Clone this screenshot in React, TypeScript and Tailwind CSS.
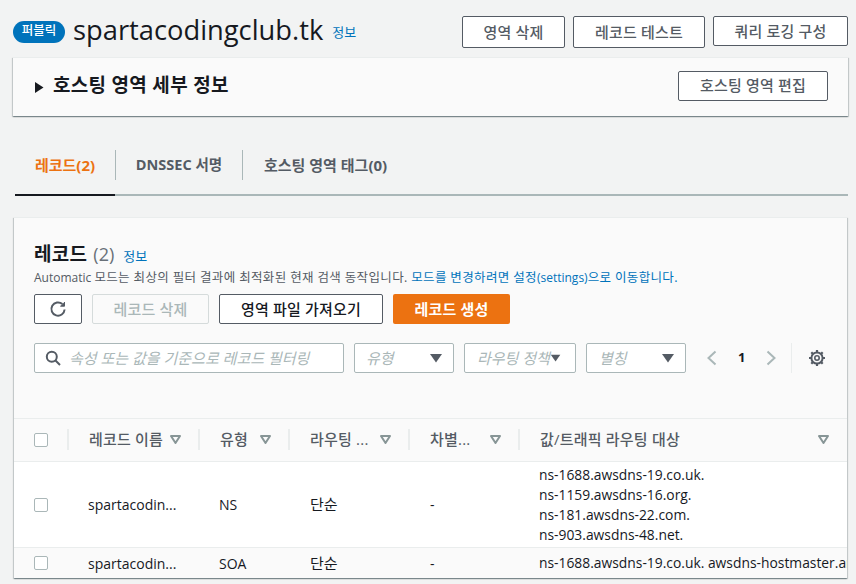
import React from "react";

const font = { fontFamily: '"Open Sans","Noto Sans CJK KR",sans-serif' };
const columns = "grid grid-cols-[53px_131px_90px_120px_110px_1fr]";

function Btn({ children, className = "" }: { children: React.ReactNode; className?: string }) {
  return (
    <div className={`flex items-center justify-center border border-[#545b64] rounded-[2px] bg-white text-[15px] font-medium tracking-[0.2px] text-[#545b64] ${className}`}>
      {children}
    </div>
  );
}

function Caret({ className = "" }: { className?: string }) {
  return (
    <svg width="14" height="10" viewBox="0 0 14 10" className={className}>
      <path d="M1 1h12L7 9.5z" fill="#545b64" />
    </svg>
  );
}

function Sort() {
  return (
    <svg width="11" height="9" viewBox="0 0 11 9" className="shrink-0">
      <path d="M1 1h9L5.5 8z" fill="none" stroke="#879596" strokeWidth="2" strokeLinejoin="round" />
    </svg>
  );
}

function Check() {
  return <div className="w-[14px] h-[14px] border border-[#aab7b8] rounded-[2px] bg-white" />;
}

function Select({ label, className = "" }: { label: string; className?: string }) {
  return (
    <div className={`flex items-center h-[30px] border border-[#aab7b8] rounded-[2px] bg-white text-[15px] italic text-[#aab7b8] ${className}`}>
      <span className="flex-1 whitespace-nowrap">{label}</span>
      <Caret />
    </div>
  );
}

function HeadCell({ label, children, className = "" }: { label: string; children?: React.ReactNode; className?: string }) {
  return (
    <div className={`flex items-center h-[21px] border-l-2 border-[#eaeded] text-[15px] font-medium tracking-[0.2px] text-[#545b64] whitespace-nowrap ${className}`}>
      {label}
      {children}
    </div>
  );
}

export default function App() {
  return (
    <div style={font} className="w-[856px] h-[584px] overflow-hidden bg-[#f2f3f3] text-[#16191f] flex flex-col pl-[13px] pr-[8px]">
      <div className="flex items-start pt-[16px] h-[57px]">
        <div className="flex items-center h-[30px]">
          <span className="flex items-center justify-center w-[52px] h-[22px] mt-[1px] rounded-full bg-[#0073bb] text-white text-[12.5px] font-medium">퍼블릭</span>
          <span className="ml-[8px] mb-[2px] text-[27.3px] leading-[30px] text-[#16191f]">spartacodingclub.tk</span>
          <span className="ml-[9px] mt-[4px] text-[13px] text-[#0073bb]">정보</span>
        </div>
        <div className="ml-auto flex items-start gap-[8px]">
          <Btn className="w-[103px] h-[32px]">영역 삭제</Btn>
          <Btn className="w-[132px] h-[32px]">레코드 테스트</Btn>
          <Btn className="w-[135px] h-[30px]">쿼리 로깅 구성</Btn>
        </div>
      </div>

      <div className="flex items-center h-[59px] bg-[#fafafa] border-t border-[#eaeded] shadow-[0_1px_1px_0_rgba(0,28,36,0.3),1px_1px_1px_0_rgba(0,28,36,0.15),-1px_1px_1px_0_rgba(0,28,36,0.15)] pl-[22px] pr-[20px]">
        <svg width="9" height="11" viewBox="0 0 9 11"><path d="M0 0l8.5 5.5L0 11z" fill="#16191f" /></svg>
        <span className="ml-[9px] mb-[4px] text-[19px] font-bold tracking-[0.3px] text-[#16191f]">호스팅 영역 세부 정보</span>
        <Btn className="ml-auto w-[150px] h-[30px] mb-[3px]">호스팅 영역 편집</Btn>
      </div>

      <div className="mt-[34px] ml-[2px] h-[46px] flex items-start border-b-2 border-[#aab7b8] relative">
        <div className="absolute left-0 bottom-[-2px] w-[100px] h-[2px] bg-[#16191f]" />
        <div className="w-[100px] h-[30px] flex items-center justify-center text-[15px] font-bold text-[#ec7211]">레코드(2)</div>
        <div className="w-[127px] h-[30px] flex items-center justify-center border-l border-[#aab7b8] text-[14.5px] font-bold text-[#545b64]">DNSSEC 서명</div>
        <div className="h-[30px] flex items-center pl-[21px] border-l border-[#aab7b8] text-[15px] font-bold text-[#545b64]">호스팅 영역 태그(0)</div>
      </div>

      <div className="mt-[21px] ml-[1px] mr-[1px] h-[361px] flex flex-col bg-[#fafafa] border-t border-[#eaeded] shadow-[0_1px_1px_0_rgba(0,28,36,0.3),1px_1px_1px_0_rgba(0,28,36,0.15),-1px_1px_1px_0_rgba(0,28,36,0.15)]">
        <div className="pl-[20px] pr-[14px] pt-[22px]">
          <div className="flex items-baseline h-[29px]">
            <span className="text-[19px] font-bold tracking-[0.3px] text-[#16191f]">레코드</span>
            <span className="ml-[6px] text-[18px] text-[#687078]">(2)</span>
            <span className="ml-[9px] text-[13px] text-[#0073bb]">정보</span>
          </div>
          <div className="h-[18px] text-[12px] leading-[18px] text-[#545b64] whitespace-nowrap">
            Automatic{" "}
            <span className="text-[12.5px] tracking-[0.35px]">모드는 최상의 필터 결과에 최적화된 현재 검색 동작입니다. </span>
            <span className="text-[12.5px] tracking-[0.35px] text-[#0073bb]">모드를 변경하려면 설정<span className="text-[12px] tracking-normal">(settings)</span>으로 이동합니다.</span>
          </div>
          <div className="mt-[7px] flex gap-[10px]">
            <Btn className="w-[48px] h-[30px]">
              <svg width="18" height="18" viewBox="0 0 18 18" fill="none" stroke="#545b64" strokeWidth="2">
                <path d="M15.6 9.5a6.6 6.6 0 1 1-2.2-5.4" />
                <path d="M15.5 2v4.2h-4.2" fill="#545b64" strokeWidth="1" />
              </svg>
            </Btn>
            <div className="flex items-center justify-center w-[117px] h-[30px] border border-[#d5dbdb] rounded-[2px] text-[15px] font-medium tracking-[0.2px] text-[#aab7b8]">레코드 삭제</div>
            <Btn className="w-[164px] h-[30px] !text-[#16191f]">영역 파일 가져오기</Btn>
            <div className="flex items-center justify-center w-[117px] h-[30px] rounded-[2px] bg-[#ec7211] text-white text-[15px] font-bold tracking-[0.2px]">레코드 생성</div>
          </div>
          <div className="mt-[19px] flex items-center">
            <div className="flex items-center w-[310px] h-[30px] pl-[10px] border border-[#aab7b8] rounded-[2px] bg-white text-[15px] italic text-[#aab7b8]">
              <svg width="16" height="16" viewBox="0 0 16 16" fill="none" stroke="#545b64" strokeWidth="2">
                <circle cx="6.8" cy="6.8" r="5" />
                <path d="M10.5 10.5l4.5 4.5" />
              </svg>
              <span className="ml-[8px] whitespace-nowrap">속성 또는 값을 기준으로 레코드 필터링</span>
            </div>
            <Select label="유형" className="ml-[10px] w-[100px] pl-[11px] pr-[10px]" />
            <Select label="라우팅 정책" className="ml-[10px] w-[112px] pl-[12px] pr-[14px]" />
            <Select label="별칭" className="ml-[10px] w-[100px] pl-[12px] pr-[10px]" />
            <svg width="12" height="16" viewBox="0 0 12 16" fill="none" stroke="#aab7b8" strokeWidth="2" className="ml-[20px]"><path d="M9.5 1.5L2.5 8l7 6.5" /></svg>
            <span className="ml-[20px] text-[13px] font-bold text-[#16191f]">1</span>
            <svg width="12" height="16" viewBox="0 0 12 16" fill="none" stroke="#aab7b8" strokeWidth="2" className="ml-[20px]"><path d="M2.5 1.5l7 6.5-7 6.5" /></svg>
            <div className="ml-[14px] w-px h-[30px] bg-[#eaeded]" />
            <svg width="18" height="18" viewBox="0 0 18 18" className="ml-[16px]" fill="none" stroke="#545b64">
              <circle cx="9" cy="9" r="2.2" strokeWidth="1.6" />
              <circle cx="9" cy="9" r="5.6" strokeWidth="2" />
              <path d="M9 1v2.4M9 14.6V17M1 9h2.4M14.6 9H17M3.3 3.3L5 5M13 13l1.7 1.7M3.3 14.7L5 13M13 5l1.7-1.7" strokeWidth="2.2" />
            </svg>
          </div>
        </div>

        <div className="mt-[45px] border-t border-[#eaeded] flex-1 flex flex-col">
          <div className={`${columns} items-center h-[43px] border-b border-[#eaeded] bg-[#fafafa] pb-[1px]`}>
            <div className="pl-[20px]"><Check /></div>
            <HeadCell label="레코드 이름" className="pl-[20px] gap-[7px]"><Sort /></HeadCell>
            <HeadCell label="유형" className="pl-[20px] gap-[12px]"><Sort /></HeadCell>
            <HeadCell label="라우팅 ..." className="pl-[20px] gap-[11px]"><Sort /></HeadCell>
            <HeadCell label="차별..." className="pl-[20px] gap-[20px]"><Sort /></HeadCell>
            <HeadCell label="값/트래픽 라우팅 대상" className="pl-[20px] pr-[18px] justify-between"><Sort /></HeadCell>
          </div>
          <div className={`${columns} items-center h-[86px] border-b border-[#eaeded] bg-white text-[14px] text-[#16191f]`}>
            <div className="pl-[20px]"><Check /></div>
            <div className="pl-[21px]">spartacodin...</div>
            <div className="pl-[21px]">NS</div>
            <div className="pl-[22px] text-[15px]">단순</div>
            <div className="pl-[22px]">-</div>
            <div className="pl-[21px] leading-[20px] text-[13.85px]">
              <div>ns-1688.awsdns-19.co.uk.</div>
              <div>ns-1159.awsdns-16.org.</div>
              <div>ns-181.awsdns-22.com.</div>
              <div>ns-903.awsdns-48.net.</div>
            </div>
          </div>
          <div className={`${columns} items-center h-[30px] text-[14px] text-[#16191f]`}>
            <div className="pl-[20px]"><Check /></div>
            <div className="pl-[21px]">spartacodin...</div>
            <div className="pl-[21px]">SOA</div>
            <div className="pl-[22px] text-[15px]">단순</div>
            <div className="pl-[22px]">-</div>
            <div className="pl-[21px] text-[13.85px] whitespace-nowrap overflow-hidden">ns-1688.awsdns-19.co.uk. awsdns-hostmaster.amazon.com.</div>
          </div>
        </div>
      </div>
    </div>
  );
}
